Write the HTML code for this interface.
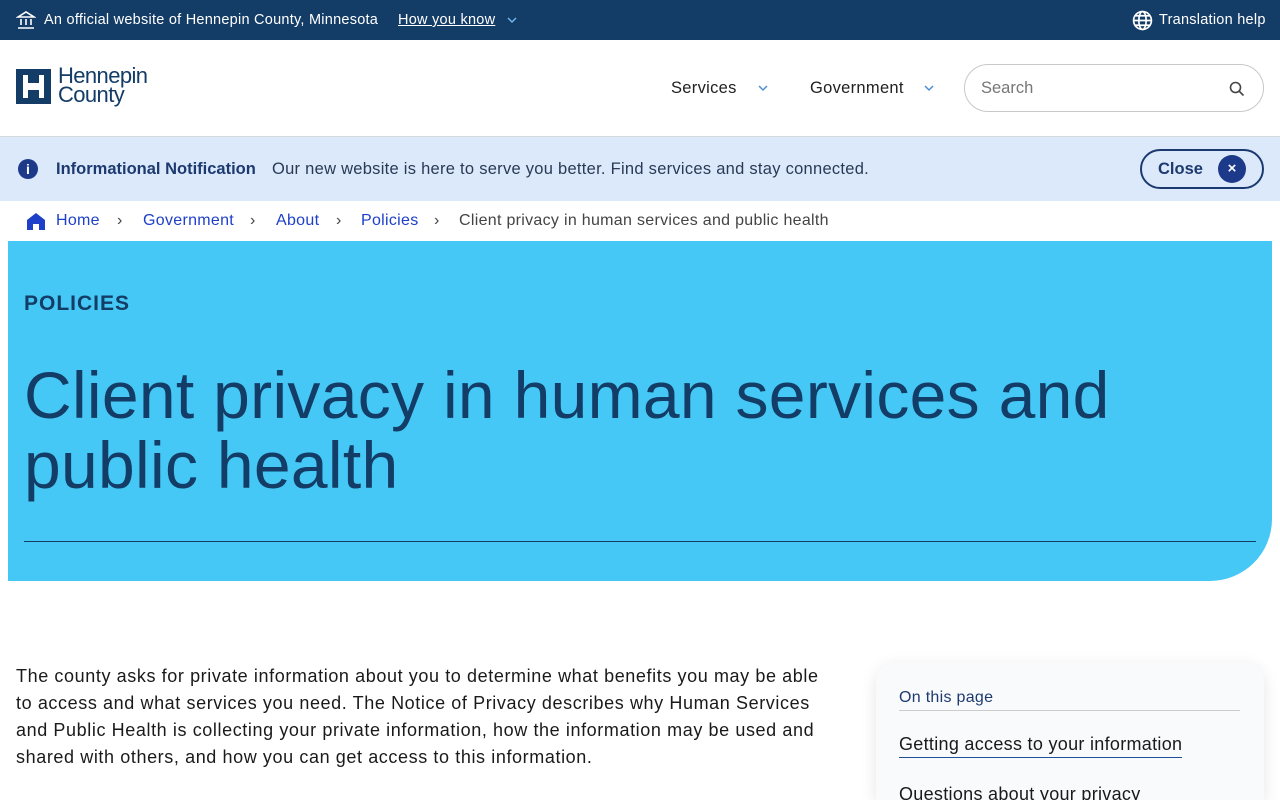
<!DOCTYPE html>
<html style="overflow:hidden;height:800px"><head><meta charset="utf-8"><style>
*{box-sizing:border-box;margin:0;padding:0}
body{width:1280px;height:800px;overflow:hidden;font-family:"Liberation Sans",sans-serif;background:#fff;color:#1a1a1a;position:relative}
.top{position:absolute;left:0;top:0;width:1280px;height:40px;background:#133c66;color:#fff;font-size:14.5px;letter-spacing:0.25px}
.top .t{position:absolute;top:12px}
.hdr{position:absolute;top:40px;left:0;width:1280px;height:97px;border-bottom:1px solid #d5d9de}
.note{position:absolute;top:137px;left:0;width:1280px;height:64px;background:#dbe9fb}
.crumb{position:absolute;top:212px;font-size:16px;color:#1e40c8;letter-spacing:0.3px}
.hero{position:absolute;left:8px;top:241px;width:1264px;height:340px;background:#45c8f5;border-bottom-right-radius:62px}
.a{position:absolute}
</style></head><body>
<div class="top">
<svg class="a" style="left:16px;top:10px" width="20" height="20" viewBox="0 0 20 20" fill="none" stroke="#fff" stroke-width="1.6"><path d="M2 7L10 2L18 7Z"/><path d="M5 9v6M10 9v6M15 9v6M2 18h16"/></svg>
<span class="t" style="left:44px">An official website of Hennepin County, Minnesota</span>
<span class="t" style="left:398px;text-decoration:underline">How you know</span>
<svg class="a" style="left:506px;top:15px" width="12" height="10" viewBox="0 0 12 10"><path d="M2 3l4 4 4-4" stroke="#6fb6ee" stroke-width="1.5" fill="none"/></svg>
<svg class="a" style="left:1132px;top:10px" width="21" height="21" viewBox="0 0 20 20" fill="none" stroke="#fff" stroke-width="1.6"><circle cx="10" cy="10" r="8.5"/><ellipse cx="10" cy="10" rx="3.5" ry="8.5"/><path d="M1.5 10h17M3 5.5h14M3 14.5h14"/></svg>
<span class="t" style="left:1159px">Translation help</span>
</div>
<div class="hdr">
<div class="a" style="left:16px;top:29px;width:35px;height:35px;background:#133c66"></div>
<div class="a" style="left:23px;top:35px;width:21px;height:23px;background:#fff"></div>
<div class="a" style="left:28px;top:35px;width:11px;height:8px;background:#133c66"></div>
<div class="a" style="left:28px;top:50px;width:11px;height:8px;background:#133c66"></div>
<div class="a" style="left:58px;top:26px;font-size:22px;line-height:19px;color:#133c66;letter-spacing:-0.6px">Hennepin<br>County</div>
<span class="a" style="left:671px;top:39px;font-size:16.5px;color:#222;letter-spacing:0.3px">Services</span>
<svg class="a" style="left:757px;top:43px" width="12" height="10" viewBox="0 0 12 10"><path d="M2 3l4 4 4-4" stroke="#4a90d9" stroke-width="1.5" fill="none"/></svg>
<span class="a" style="left:810px;top:39px;font-size:16.5px;color:#222;letter-spacing:0.3px">Government</span>
<svg class="a" style="left:923px;top:43px" width="12" height="10" viewBox="0 0 12 10"><path d="M2 3l4 4 4-4" stroke="#4a90d9" stroke-width="1.5" fill="none"/></svg>
<div class="a" style="left:964px;top:24px;width:300px;height:48px;border:1px solid #c8c8c8;border-radius:24px"></div>
<span class="a" style="left:981px;top:39px;font-size:16.5px;color:#777">Search</span>
<svg class="a" style="left:1228px;top:40px" width="18" height="18" viewBox="0 0 18 18" fill="none" stroke="#444" stroke-width="1.6"><circle cx="7.5" cy="7.5" r="5"/><path d="M11 11l4.5 4.5"/></svg>
</div>
<div class="note">
<div class="a" style="left:18px;top:22px;width:20px;height:20px;border-radius:50%;background:#1d3a8a;color:#fff;font-size:14px;font-weight:bold;text-align:center;line-height:20px">i</div>
<span class="a" style="left:56px;top:23px;font-size:16.5px;font-weight:bold;color:#1d3a70">Informational Notification</span>
<span class="a" style="left:272px;top:23px;font-size:16.5px;color:#2a3a55;letter-spacing:0.27px">Our new website is here to serve you better. Find services and stay connected.</span>
<div class="a" style="left:1140px;top:12px;width:124px;height:40px;border:2px solid #1d3a70;border-radius:20px"></div>
<span class="a" style="left:1158px;top:23px;font-size:16.5px;font-weight:bold;color:#1d3a70">Close</span>
<div class="a" style="left:1218px;top:18px;width:28px;height:28px;border-radius:50%;background:#1d3a8a;color:#fff;font-size:15px;font-weight:bold;text-align:center;line-height:28px">×</div>
</div>
<svg class="a" style="left:26px;top:212px" width="20" height="18" viewBox="0 0 20 18"><path d="M10 1L1 8v10h6v-6h6v6h6V8Z" fill="#1e40c8"/></svg>
<span class="crumb" style="left:56px">Home</span>
<span class="crumb" style="left:117px;color:#444">›</span>
<span class="crumb" style="left:143px">Government</span>
<span class="crumb" style="left:250px;color:#444">›</span>
<span class="crumb" style="left:276px">About</span>
<span class="crumb" style="left:336px;color:#444">›</span>
<span class="crumb" style="left:361px">Policies</span>
<span class="crumb" style="left:434px;color:#444">›</span>
<span class="crumb" style="left:459px;color:#444">Client privacy in human services and public health</span>
<div class="hero">
<div class="a" style="left:16px;top:51px;font-size:21px;font-weight:bold;letter-spacing:1px;color:#133c66">POLICIES</div>
<div class="a" style="left:16px;top:119px;font-size:66px;line-height:70px;color:#133c66;letter-spacing:0.3px;width:1240px">Client privacy in human services and<br>public health</div>
<div class="a" style="left:16px;top:300px;width:1232px;height:1px;background:#133c66"></div>
</div>
<div class="a" style="left:16px;top:663px;font-size:18px;line-height:27px;color:#1a1a1a;white-space:nowrap;letter-spacing:0.6px">The county asks for private information about you to determine what benefits you may be able<br>to access and what services you need. The Notice of Privacy describes why Human Services<br>and Public Health is collecting your private information, how the information may be used and<br>shared with others, and how you can get access to this information.</div>
<div class="a" style="left:876px;top:662px;width:388px;height:138px;background:#f8fafc;border-radius:20px 20px 0 0;box-shadow:0 4px 16px rgba(0,0,0,0.1)">
<span class="a" style="left:23px;top:27px;font-size:16px;color:#1d3a70;letter-spacing:0.3px">On this page</span>
<div class="a" style="left:23px;top:48px;width:341px;height:1px;background:#ccc"></div>
<span class="a" style="left:23px;top:72px;font-size:18px;color:#1a1a1a;border-bottom:1px solid #1d4f9a;padding-bottom:2px;letter-spacing:0.3px">Getting access to your information</span>
<span class="a" style="left:23px;top:122px;font-size:18px;color:#1a1a1a;letter-spacing:0.3px">Questions about your privacy</span>
</div>
</body></html>
